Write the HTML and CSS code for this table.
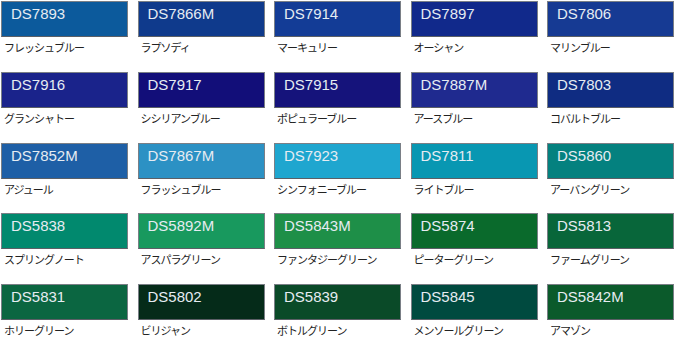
FILE: index.html
```html
<!DOCTYPE html>
<html lang="ja">
<head>
<meta charset="utf-8">
<title>カラーチャート</title>
<link rel="stylesheet" href="styles.css">
</head>
<body>
<div class="chart">
  <div class="item"><div class="swatch c7893">DS7893</div><div class="label">フレッシュブルー</div></div>
  <div class="item"><div class="swatch c7866m">DS7866M</div><div class="label">ラプソディ</div></div>
  <div class="item"><div class="swatch c7914">DS7914</div><div class="label">マーキュリー</div></div>
  <div class="item"><div class="swatch c7897">DS7897</div><div class="label">オーシャン</div></div>
  <div class="item"><div class="swatch c7806">DS7806</div><div class="label">マリンブルー</div></div>

  <div class="item"><div class="swatch c7916">DS7916</div><div class="label">グランシャトー</div></div>
  <div class="item"><div class="swatch c7917">DS7917</div><div class="label">シシリアンブルー</div></div>
  <div class="item"><div class="swatch c7915">DS7915</div><div class="label">ポピュラーブルー</div></div>
  <div class="item"><div class="swatch c7887m">DS7887M</div><div class="label">アースブルー</div></div>
  <div class="item"><div class="swatch c7803">DS7803</div><div class="label">コバルトブルー</div></div>

  <div class="item"><div class="swatch c7852m">DS7852M</div><div class="label">アジュール</div></div>
  <div class="item"><div class="swatch c7867m">DS7867M</div><div class="label">フラッシュブルー</div></div>
  <div class="item"><div class="swatch c7923">DS7923</div><div class="label">シンフォニーブルー</div></div>
  <div class="item"><div class="swatch c7811">DS7811</div><div class="label">ライトブルー</div></div>
  <div class="item"><div class="swatch c5860">DS5860</div><div class="label">アーバングリーン</div></div>

  <div class="item"><div class="swatch c5838">DS5838</div><div class="label">スプリングノート</div></div>
  <div class="item"><div class="swatch c5892m">DS5892M</div><div class="label">アスパラグリーン</div></div>
  <div class="item"><div class="swatch c5843m">DS5843M</div><div class="label">ファンタジーグリーン</div></div>
  <div class="item"><div class="swatch c5874">DS5874</div><div class="label">ピーターグリーン</div></div>
  <div class="item"><div class="swatch c5813">DS5813</div><div class="label">ファームグリーン</div></div>

  <div class="item"><div class="swatch c5831">DS5831</div><div class="label">ホリーグリーン</div></div>
  <div class="item"><div class="swatch c5802">DS5802</div><div class="label">ビリジャン</div></div>
  <div class="item"><div class="swatch c5839">DS5839</div><div class="label">ボトルグリーン</div></div>
  <div class="item"><div class="swatch c5845">DS5845</div><div class="label">メンソールグリーン</div></div>
  <div class="item"><div class="swatch c5842m">DS5842M</div><div class="label">アマゾン</div></div>
</div>
</body>
</html>
```

FILE: styles.css
```css
html, body {
  margin: 0;
  padding: 0;
  background: #ffffff;
}

.chart {
  display: grid;
  grid-template-columns: repeat(5, 127px);
  grid-auto-rows: 70.75px;
  column-gap: 9.5px;
  padding: 1px 0 0 1px;
}

.item {
  display: flex;
  flex-direction: column;
}

.swatch {
  box-sizing: border-box;
  height: 36px;
  border: 1px solid #7a7f86;
  border-bottom-color: #5b5f66;
  padding: 3px 0 0 9px;
  font-family: "Liberation Sans", Arial, sans-serif;
  font-size: 15px;
  line-height: 17px;
  color: #e6ecf2;
}

.label {
  margin: 4px 0 0 3px;
  font-family: "Noto Sans CJK JP", sans-serif;
  font-size: 11px;
  line-height: 13px;
  color: #222222;
  letter-spacing: -1px;
}

.c7893 { background: #0c5a9c; }
.c7866m { background: #0f3a8c; }
.c7914 { background: #133c96; }
.c7897 { background: #11298b; }
.c7806 { background: #163a93; }

.c7916 { background: #1a238b; }
.c7917 { background: #120e79; }
.c7915 { background: #15137b; }
.c7887m { background: #1f2a8f; }
.c7803 { background: #0f2c82; }

.c7852m { background: #1e5fa6; }
.c7867m { background: #2c91c4; }
.c7923 { background: #1fa6cf; }
.c7811 { background: #0897b2; }
.c5860 { background: #04817f; }

.c5838 { background: #01896e; }
.c5892m { background: #18995e; }
.c5843m { background: #1e8f48; }
.c5874 { background: #0a6a2c; }
.c5813 { background: #08663a; }

.c5831 { background: #0b6641; }
.c5802 { background: #052b19; }
.c5839 { background: #0a4a28; }
.c5845 { background: #004a3f; }
.c5842m { background: #0b5a2b; }
```
